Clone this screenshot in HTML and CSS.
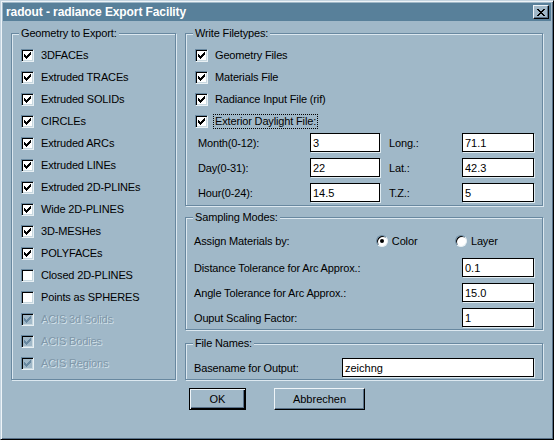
FILE: index.html
```html
<!DOCTYPE html>
<html>
<head>
<meta charset="utf-8">
<title>radout - radiance Export Facility</title>
<link rel="stylesheet" href="styles.css">
</head>
<body>
<div class="window">
  <div class="titlebar">
    <span class="title">radout - radiance Export Facility</span>
    <span class="close"><svg width="8" height="7" viewBox="0 0 8 7" shape-rendering="crispEdges"><path d="M0 0h2v1h-2z M6 0h2v1h-2z M1 1h2v1h-2z M5 1h2v1h-2z M2 2h4v1h-4z M3 3h2v1h-2z M2 4h4v1h-4z M1 5h2v1h-2z M5 5h2v1h-2z M0 6h2v1h-2z M6 6h2v1h-2z" fill="#000"/></svg></span>
  </div>
  <div class="client">
    <div class="group geometry">
      <span class="legend">Geometry to Export:</span>
      <div class="check"><span class="box on"><svg class="tick" viewBox="0 0 11 11" shape-rendering="crispEdges"><path d="M8 2h1v1h-1z M7 3h2v1h-2z M2 4h1v1h-1z M6 4h3v1h-3z M2 5h2v1h-2z M5 5h3v1h-3z M2 6h5v1h-5z M3 7h3v1h-3z M4 8h1v1h-1z"/></svg></span><span class="text">3DFACEs</span></div>
      <div class="check"><span class="box on"><svg class="tick" viewBox="0 0 11 11" shape-rendering="crispEdges"><path d="M8 2h1v1h-1z M7 3h2v1h-2z M2 4h1v1h-1z M6 4h3v1h-3z M2 5h2v1h-2z M5 5h3v1h-3z M2 6h5v1h-5z M3 7h3v1h-3z M4 8h1v1h-1z"/></svg></span><span class="text">Extruded TRACEs</span></div>
      <div class="check"><span class="box on"><svg class="tick" viewBox="0 0 11 11" shape-rendering="crispEdges"><path d="M8 2h1v1h-1z M7 3h2v1h-2z M2 4h1v1h-1z M6 4h3v1h-3z M2 5h2v1h-2z M5 5h3v1h-3z M2 6h5v1h-5z M3 7h3v1h-3z M4 8h1v1h-1z"/></svg></span><span class="text">Extruded SOLIDs</span></div>
      <div class="check"><span class="box on"><svg class="tick" viewBox="0 0 11 11" shape-rendering="crispEdges"><path d="M8 2h1v1h-1z M7 3h2v1h-2z M2 4h1v1h-1z M6 4h3v1h-3z M2 5h2v1h-2z M5 5h3v1h-3z M2 6h5v1h-5z M3 7h3v1h-3z M4 8h1v1h-1z"/></svg></span><span class="text">CIRCLEs</span></div>
      <div class="check"><span class="box on"><svg class="tick" viewBox="0 0 11 11" shape-rendering="crispEdges"><path d="M8 2h1v1h-1z M7 3h2v1h-2z M2 4h1v1h-1z M6 4h3v1h-3z M2 5h2v1h-2z M5 5h3v1h-3z M2 6h5v1h-5z M3 7h3v1h-3z M4 8h1v1h-1z"/></svg></span><span class="text">Extruded ARCs</span></div>
      <div class="check"><span class="box on"><svg class="tick" viewBox="0 0 11 11" shape-rendering="crispEdges"><path d="M8 2h1v1h-1z M7 3h2v1h-2z M2 4h1v1h-1z M6 4h3v1h-3z M2 5h2v1h-2z M5 5h3v1h-3z M2 6h5v1h-5z M3 7h3v1h-3z M4 8h1v1h-1z"/></svg></span><span class="text">Extruded LINEs</span></div>
      <div class="check"><span class="box on"><svg class="tick" viewBox="0 0 11 11" shape-rendering="crispEdges"><path d="M8 2h1v1h-1z M7 3h2v1h-2z M2 4h1v1h-1z M6 4h3v1h-3z M2 5h2v1h-2z M5 5h3v1h-3z M2 6h5v1h-5z M3 7h3v1h-3z M4 8h1v1h-1z"/></svg></span><span class="text">Extruded 2D-PLINEs</span></div>
      <div class="check"><span class="box on"><svg class="tick" viewBox="0 0 11 11" shape-rendering="crispEdges"><path d="M8 2h1v1h-1z M7 3h2v1h-2z M2 4h1v1h-1z M6 4h3v1h-3z M2 5h2v1h-2z M5 5h3v1h-3z M2 6h5v1h-5z M3 7h3v1h-3z M4 8h1v1h-1z"/></svg></span><span class="text">Wide 2D-PLINES</span></div>
      <div class="check"><span class="box on"><svg class="tick" viewBox="0 0 11 11" shape-rendering="crispEdges"><path d="M8 2h1v1h-1z M7 3h2v1h-2z M2 4h1v1h-1z M6 4h3v1h-3z M2 5h2v1h-2z M5 5h3v1h-3z M2 6h5v1h-5z M3 7h3v1h-3z M4 8h1v1h-1z"/></svg></span><span class="text">3D-MESHes</span></div>
      <div class="check"><span class="box on"><svg class="tick" viewBox="0 0 11 11" shape-rendering="crispEdges"><path d="M8 2h1v1h-1z M7 3h2v1h-2z M2 4h1v1h-1z M6 4h3v1h-3z M2 5h2v1h-2z M5 5h3v1h-3z M2 6h5v1h-5z M3 7h3v1h-3z M4 8h1v1h-1z"/></svg></span><span class="text">POLYFACEs</span></div>
      <div class="check"><span class="box"></span><span class="text">Closed 2D-PLINES</span></div>
      <div class="check"><span class="box"></span><span class="text">Points as SPHERES</span></div>
      <div class="check disabled"><span class="box on"><svg class="tick" viewBox="0 0 11 11" shape-rendering="crispEdges"><path d="M8 2h1v1h-1z M7 3h2v1h-2z M2 4h1v1h-1z M6 4h3v1h-3z M2 5h2v1h-2z M5 5h3v1h-3z M2 6h5v1h-5z M3 7h3v1h-3z M4 8h1v1h-1z"/></svg></span><span class="text">ACIS 3d Solids</span></div>
      <div class="check disabled"><span class="box on"><svg class="tick" viewBox="0 0 11 11" shape-rendering="crispEdges"><path d="M8 2h1v1h-1z M7 3h2v1h-2z M2 4h1v1h-1z M6 4h3v1h-3z M2 5h2v1h-2z M5 5h3v1h-3z M2 6h5v1h-5z M3 7h3v1h-3z M4 8h1v1h-1z"/></svg></span><span class="text">ACIS Bodies</span></div>
      <div class="check disabled"><span class="box on"><svg class="tick" viewBox="0 0 11 11" shape-rendering="crispEdges"><path d="M8 2h1v1h-1z M7 3h2v1h-2z M2 4h1v1h-1z M6 4h3v1h-3z M2 5h2v1h-2z M5 5h3v1h-3z M2 6h5v1h-5z M3 7h3v1h-3z M4 8h1v1h-1z"/></svg></span><span class="text">ACIS Regions</span></div>
    </div>

    <div class="right">
      <div class="group filetypes">
        <span class="legend">Write Filetypes:</span>
        <div class="check"><span class="box on"><svg class="tick" viewBox="0 0 11 11" shape-rendering="crispEdges"><path d="M8 2h1v1h-1z M7 3h2v1h-2z M2 4h1v1h-1z M6 4h3v1h-3z M2 5h2v1h-2z M5 5h3v1h-3z M2 6h5v1h-5z M3 7h3v1h-3z M4 8h1v1h-1z"/></svg></span><span class="text">Geometry Files</span></div>
        <div class="check"><span class="box on"><svg class="tick" viewBox="0 0 11 11" shape-rendering="crispEdges"><path d="M8 2h1v1h-1z M7 3h2v1h-2z M2 4h1v1h-1z M6 4h3v1h-3z M2 5h2v1h-2z M5 5h3v1h-3z M2 6h5v1h-5z M3 7h3v1h-3z M4 8h1v1h-1z"/></svg></span><span class="text">Materials File</span></div>
        <div class="check"><span class="box on"><svg class="tick" viewBox="0 0 11 11" shape-rendering="crispEdges"><path d="M8 2h1v1h-1z M7 3h2v1h-2z M2 4h1v1h-1z M6 4h3v1h-3z M2 5h2v1h-2z M5 5h3v1h-3z M2 6h5v1h-5z M3 7h3v1h-3z M4 8h1v1h-1z"/></svg></span><span class="text">Radiance Input File (rif)</span></div>
        <div class="check"><span class="box on"><svg class="tick" viewBox="0 0 11 11" shape-rendering="crispEdges"><path d="M8 2h1v1h-1z M7 3h2v1h-2z M2 4h1v1h-1z M6 4h3v1h-3z M2 5h2v1h-2z M5 5h3v1h-3z M2 6h5v1h-5z M3 7h3v1h-3z M4 8h1v1h-1z"/></svg></span><span class="text focus">Exterior Daylight File:</span></div>
        <div class="fields">
          <span class="label">Month(0-12):</span><input class="edit" value="3" readonly>
          <span class="label second">Long.:</span><input class="edit wide" value="71.1" readonly>
          <span class="label">Day(0-31):</span><input class="edit" value="22" readonly>
          <span class="label second">Lat.:</span><input class="edit wide" value="42.3" readonly>
          <span class="label">Hour(0-24):</span><input class="edit" value="14.5" readonly>
          <span class="label second">T.Z.:</span><input class="edit wide" value="5" readonly>
        </div>
      </div>

      <div class="group sampling">
        <span class="legend">Sampling Modes:</span>
        <div class="radio-row">
          <span class="radio-label">Assign Materials by:</span>
          <span class="option"><span class="radio on"></span>Color</span>
          <span class="option"><span class="radio"></span>Layer</span>
        </div>
        <div class="param"><span>Distance Tolerance for Arc Approx.:</span><input class="edit wide" value="0.1" readonly></div>
        <div class="param"><span>Angle Tolerance for Arc Approx.:</span><input class="edit wide" value="15.0" readonly></div>
        <div class="param"><span>Ouput Scaling Factor:</span><input class="edit wide" value="1" readonly></div>
      </div>

      <div class="group filenames">
        <span class="legend">File Names:</span>
        <div class="param"><span>Basename for Output:</span><input class="edit long" value="zeichng" readonly></div>
      </div>

      <div class="buttons">
        <button class="btn default">OK</button>
        <button class="btn cancel">Abbrechen</button>
      </div>
    </div>
  </div>
</div>
</body>
</html>
```

FILE: styles.css
```css
* {
  box-sizing: border-box;
}

html,
body {
  margin: 0;
  padding: 0;
}

body {
  width: 554px;
  height: 440px;
  background: #a0b8c8;
  font-family: "Liberation Sans", Arial, sans-serif;
  font-size: 11px;
  letter-spacing: -0.15px;
  color: #000;
  overflow: hidden;
}

.window {
  width: 554px;
  height: 440px;
  border: 1px solid;
  border-color: #c4d4e0 #000 #000 #c4d4e0;
  box-shadow: inset 1px 1px 0 #eef4f8, inset -1px -1px 0 #587088;
  padding: 2px;
  display: flex;
  flex-direction: column;
  background: #a0b8c8;
}

.titlebar {
  flex: none;
  height: 18px;
  background: #58809a;
  display: flex;
  align-items: center;
  justify-content: space-between;
  padding: 0 2px 0 3px;
}

.title {
  color: #fff;
  font-weight: bold;
  font-size: 12px;
  letter-spacing: -0.1px;
}

.close {
  width: 16px;
  height: 14px;
  background: #a0b8c8;
  border: 1px solid;
  border-color: #eef4f8 #000 #000 #eef4f8;
  box-shadow: inset -1px -1px 0 #587088;
  display: flex;
  align-items: center;
  justify-content: center;
  padding-right: 1px;
}

.close svg {
  display: block;
}

.client {
  flex: 1;
  display: flex;
  gap: 9px;
  padding: 12px 0 0 8px;
}

.group {
  position: relative;
  border: 1px solid #6888a0;
  box-shadow: inset 1px 1px 0 #dce8f0, 1px 1px 0 #dce8f0;
}

.legend {
  position: absolute;
  top: -7px;
  left: 7px;
  padding: 0 2px;
  line-height: 13px;
  background: #a0b8c8;
}

.geometry {
  flex: none;
  width: 165px;
  height: 347px;
  padding: 10px 0 0 9px;
}

.check {
  display: flex;
  align-items: center;
  height: 22px;
  gap: 5px;
}

.box {
  flex: none;
  width: 13px;
  height: 13px;
  background: #fff;
  border: 1px solid;
  border-color: #6888a0 #e8f0f4 #e8f0f4 #6888a0;
  box-shadow: inset 1px 1px 0 #000, inset -1px -1px 0 #c8d8e0;
}

.tick {
  display: block;
  width: 11px;
  height: 11px;
  fill: #000;
}

.check .text {
  padding: 0 1px;
  line-height: 13px;
  border: 1px solid transparent;
}

.check .text.focus {
  border: 1px dotted #000;
}

.check.disabled .box {
  background: #a0b8c8;
}

.check.disabled .tick {
  fill: #6888a0;
}

.check.disabled .text {
  color: #7f97a9;
  text-shadow: 1px 1px 0 #d4e2ea;
}

.right {
  flex: none;
  width: 358px;
  display: flex;
  flex-direction: column;
}

.filetypes {
  height: 173px;
  padding: 10px 0 0 9px;
}

.fields {
  display: grid;
  grid-template-columns: 112px 70px 82px 72px;
  grid-auto-rows: 19px;
  row-gap: 6px;
  align-items: center;
  margin-top: 1px;
  padding-left: 3px;
}

.label.second {
  padding-left: 9px;
}

.edit {
  display: block;
  width: 70px;
  height: 19px;
  margin: 0;
  padding: 0 2px;
  background: #fff;
  border: 1px solid #000;
  box-shadow: 1px 1px 0 #e0ecf2;
  font: inherit;
  color: #000;
  outline: none;
}

.edit.wide {
  width: 72px;
}

.edit.long {
  width: 192px;
}

.sampling {
  margin-top: 11px;
  height: 113px;
  padding: 13px 8px 0 8px;
}

.radio-row {
  display: flex;
  align-items: center;
  height: 19px;
  margin-bottom: 8px;
}

.radio-label {
  width: 184px;
}

.option {
  width: 80px;
  display: flex;
  align-items: center;
  gap: 4px;
}

.radio {
  width: 12px;
  height: 12px;
  border-radius: 50%;
  background: #fff;
  border: 1px solid;
  border-color: #6888a0 #e8f0f4 #e8f0f4 #6888a0;
  box-shadow: inset 1px 1px 0 #000;
  display: flex;
  align-items: center;
  justify-content: center;
}

.radio.on::after {
  content: "";
  width: 4px;
  height: 4px;
  border-radius: 50%;
  background: #000;
}

.param {
  display: flex;
  align-items: center;
  justify-content: space-between;
  height: 19px;
  margin-bottom: 6px;
}

.filenames {
  margin-top: 13px;
  height: 37px;
  padding: 14px 8px 0 8px;
}

.buttons {
  display: flex;
  gap: 28px;
  margin-top: 8px;
  padding-left: 4px;
}

.btn {
  height: 22px;
  margin: 0;
  padding: 0;
  font: inherit;
  color: #000;
  background: #a0b8c8;
}

.btn.default {
  width: 57px;
  border: 1px solid #000;
  box-shadow: inset 1px 1px 0 #eef4f8, inset -1px -1px 0 #000, inset -2px -2px 0 #587088;
}

.btn.cancel {
  width: 91px;
  border: 1px solid;
  border-color: #eef4f8 #000 #000 #eef4f8;
  box-shadow: inset -1px -1px 0 #587088;
}
```
